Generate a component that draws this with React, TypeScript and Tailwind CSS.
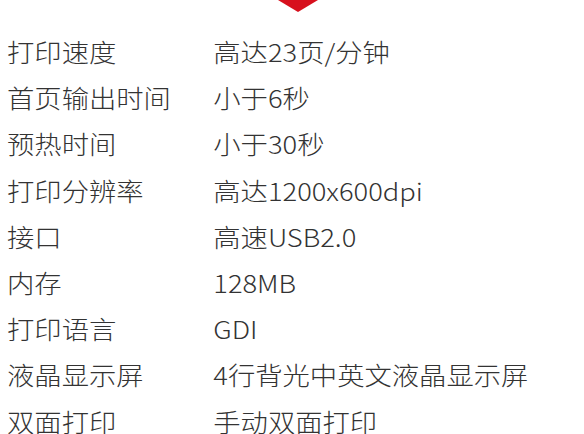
const specs: [string, string][] = [
  ["打印速度", "高达23页/分钟"],
  ["首页输出时间", "小于6秒"],
  ["预热时间", "小于30秒"],
  ["打印分辨率", "高达1200x600dpi"],
  ["接口", "高速USB2.0"],
  ["内存", "128MB"],
  ["打印语言", "GDI"],
  ["液晶显示屏", "4行背光中英文液晶显示屏"],
  ["双面打印", "手动双面打印"],
];

export default function App() {
  return (
    <div className="relative h-[434px] w-[584px] overflow-hidden bg-white font-['Noto_Sans_CJK_SC','Noto_Sans',sans-serif] text-[24.5px] font-light text-[#333]">
      <svg className="absolute left-[278px] top-0" width="40" height="13" viewBox="0 0 40 13">
        <polygon points="0,0 40,0 20,12" fill="#d7101d" />
      </svg>
      <div className="pt-[29px] pl-[7px]">
        <div className="origin-left scale-x-[1.115]">
          {specs.map(([label, value]) => (
            <div key={label} className="flex h-[46.2px] items-center leading-[46px] whitespace-nowrap">
              <span className="w-[185px] shrink-0">{label}</span>
              <span>{value}</span>
            </div>
          ))}
        </div>
      </div>
    </div>
  );
}
